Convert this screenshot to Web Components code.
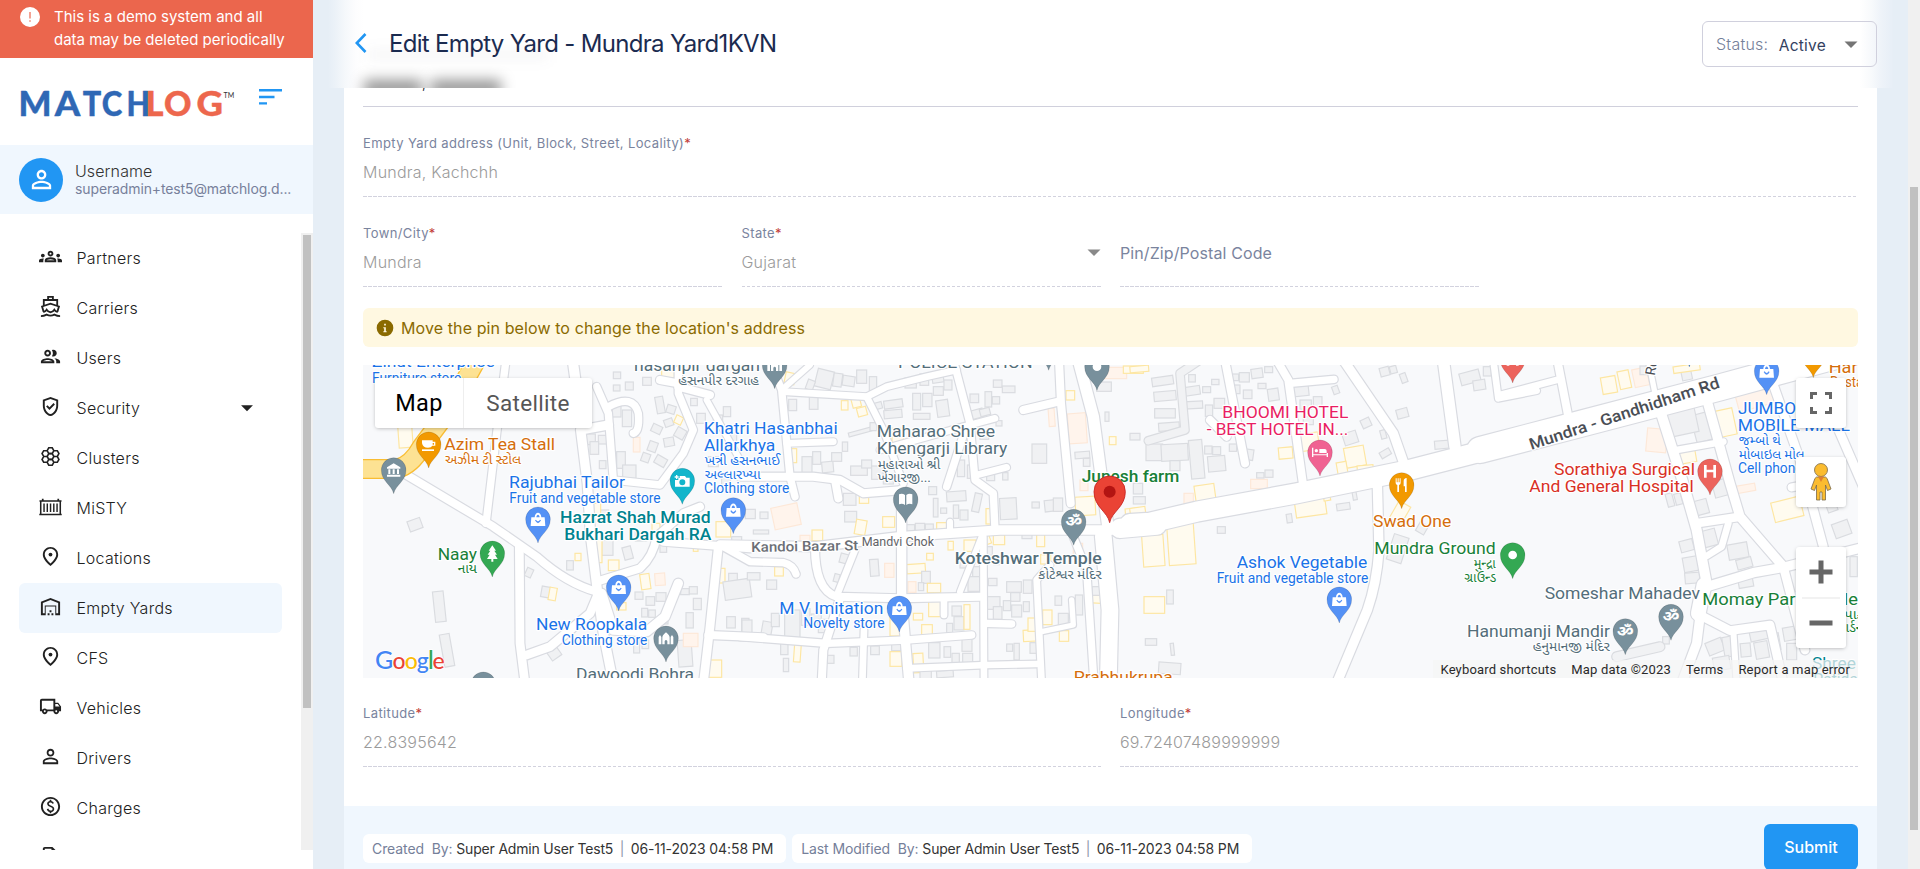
<!DOCTYPE html>
<html lang="en">
<head>
<meta charset="utf-8">
<title>Edit Empty Yard</title>
<style>
html,body{margin:0;height:100%;overflow:hidden}
body{font-family:Inter,"Liberation Sans",sans-serif;background:#e6eef6;color:#212121}
</style>
</head>
<body>
<yard-app></yard-app>
<script>
const define = (name, html, after) => {
  const t = document.createElement('template');
  t.innerHTML = html;
  customElements.define(name, class extends HTMLElement {
    constructor() {
      super();
      this.attachShadow({mode: 'open'}).appendChild(t.content.cloneNode(true));
    }
    connectedCallback() { if (after) after.call(this, this.shadowRoot); }
  });
};

/* ---------- icons ---------- */
const ICONS = {
  groups: '<path d="M4 13c1.1 0 2-.9 2-2s-.9-2-2-2-2 .9-2 2 .9 2 2 2zm1.13 1.1c-.37-.06-.74-.1-1.13-.1-.99 0-1.93.21-2.78.58C.48 14.9 0 15.62 0 16.43V18h4.5v-1.61c0-.83.23-1.61.63-2.29zM20 13c1.1 0 2-.9 2-2s-.9-2-2-2-2 .9-2 2 .9 2 2 2zm4 3.43c0-.81-.48-1.53-1.22-1.85-.85-.37-1.79-.58-2.78-.58-.39 0-.76.04-1.13.1.4.68.63 1.46.63 2.29V18H24v-1.57zm-7.76-2.78c-1.17-.52-2.61-.9-4.24-.9-1.63 0-3.07.39-4.24.9C6.68 14.13 6 15.21 6 16.39V18h12v-1.61c0-1.18-.68-2.26-1.76-2.74zM8.07 16c.09-.23.13-.39.91-.69.97-.38 1.99-.56 3.02-.56s2.05.18 3.02.56c.77.3.81.46.91.69H8.07zM12 8c.55 0 1 .45 1 1s-.45 1-1 1-1-.45-1-1 .45-1 1-1m0-2c-1.66 0-3 1.34-3 3s1.34 3 3 3 3-1.34 3-3-1.34-3-3-3z"/>',
  boat: '<g fill="none" stroke="currentColor" stroke-width="1.9"><path d="M9.5 4.6V2h5v2.6M5 10.6V5.2h14v5.4M4.8 17.6L3.2 12 12 9.1l8.800 2.900-1.600 5.600M4.500 17.900c1.600-.3 2.600-1.100 3.500-2.500 1 1.600 2.300 2.600 4 2.600s3-1 4-2.600c.9 1.400 1.900 2.200 3.500 2.500M2 22c2.400 0 4-.5 6-1.500 2.500 1.300 5.500 1.300 8 0 2 1 3.600 1.500 6 1.500"/></g>',
  people: '<path d="M9 13.750c-2.340 0-7 1.170-7 3.500V19h14v-1.750c0-2.330-4.660-3.500-7-3.500zM4.340 17c.84-.58 2.870-1.250 4.660-1.250s3.820.67 4.660 1.250H4.340zM9 12c1.930 0 3.500-1.570 3.500-3.500S10.930 5 9 5 5.500 6.570 5.500 8.500 7.070 12 9 12zm0-5c.83 0 1.500.67 1.500 1.500S9.830 10 9 10s-1.500-.67-1.500-1.500S8.170 7 9 7zm7.040 6.810c1.160.84 1.960 1.960 1.960 3.440V19h4v-1.750c0-2.020-3.500-3.170-5.960-3.440zM15 12c1.930 0 3.500-1.570 3.500-3.500S16.930 5 15 5c-.54 0-1.040.13-1.500.35.63.89 1 1.980 1 3.150s-.37 2.260-1 3.150c.46.22.96.35 1.500.35z"/>',
  shield: '<path d="M12 2 4 5v6.090c0 5.050 3.410 9.760 8 10.910 4.590-1.150 8-5.860 8-10.910V5l-8-3zm6 9.090c0 4-2.550 7.700-6 8.830-3.450-1.130-6-4.820-6-8.830V6.310l6-2.120 6 2.120v4.780zm-9.180-.5L7.400 12l3.540 3.540 5.660-5.660-1.410-1.410-4.240 4.240-2.130-2.120z"/>',
  hive: '<g fill="none" stroke="currentColor" stroke-width="1.700"><path d="M10.200 9h3.600l1.700 3-1.700 3h-3.600l-1.700-3z"/><path d="M10.200 2.900h3.600l1.700 3-1.700 3h-3.600l-1.700-3zM10.200 15.100h3.600l1.700 3-1.700 3h-3.600l-1.700-3zM15.500 5.950h3.600l1.700 3-1.700 3h-3.600M15.500 12.050h3.600l1.700 3-1.700 3h-3.600M8.500 5.950H4.900l-1.700 3 1.700 3h3.600M8.500 12.050H4.900l-1.700 3 1.700 3h3.600"/></g>',
  container: '<path d="M3 4h1.800v1.500h14.400V4H21v1.500h2.500V7H23v12.500h.7V21H.3v-1.500H1V7H.5V5.500H3zM2.600 7v12.500h18.800V7zM4.500 8.800h1.500v9H4.500zm3.400 0h1.500v9H7.900zm3.400 0h1.500v9h-1.500zm3.400 0h1.500v9h-1.500zm3.400 0h1.500v9h-1.500z" fill-rule="evenodd"/>',
  pin: '<path fill-rule="evenodd" d="M12 2c-4.200 0-8 3.220-8 8.200 0 3.320 2.670 7.250 8 11.800 5.330-4.550 8-8.480 8-11.800C20 5.220 16.200 2 12 2zm0 17.300c-4.020-3.700-6-6.800-6-9.100C6 6.600 8.700 4 12 4s6 2.600 6 6.200c0 2.300-1.980 5.400-6 9.100z"/><circle cx="12" cy="10" r="2"/>',
  warehouse: '<path d="M20 8.350V19h-2v-8H6v8H4V8.350l8-3.200 8 3.200zM22 21V7L12 3 2 7v14h5v-9h10v9h5zm-11-2H9v2h2v-2zm2-3h-2v2h2v-2zm2 3h-2v2h2v-2z"/>',
  truck: '<path fill-rule="evenodd" d="M20 8h-3V4H3c-1.100 0-2 .9-2 2v11h2c0 1.660 1.340 3 3 3s3-1.340 3-3h6c0 1.660 1.340 3 3 3s3-1.340 3-3h2v-5l-3-4zm-.5 1.500l1.960 2.500H17V9.500h2.500zM6 18c-.55 0-1-.45-1-1s.45-1 1-1 1 .45 1 1-.45 1-1 1zm2.220-3c-.55-.61-1.330-1-2.220-1s-1.670.39-2.220 1H3V6h12v9H8.220zM18 18c-.55 0-1-.45-1-1s.45-1 1-1 1 .45 1 1-.45 1-1 1z"/>',
  person: '<path d="M12 5.900c1.160 0 2.100.94 2.100 2.100s-.94 2.100-2.100 2.100S9.900 9.160 9.900 8s.94-2.100 2.100-2.100m0 9c2.970 0 6.100 1.460 6.100 2.100v1.100H5.900V17c0-.64 3.130-2.100 6.100-2.100M12 4C9.790 4 8 5.790 8 8s1.790 4 4 4 4-1.790 4-4-1.790-4-4-4zm0 9c-2.670 0-8 1.340-8 4v3h16v-3c0-2.660-5.330-4-8-4z"/>',
  paid: '<path d="M12 2C6.480 2 2 6.480 2 12s4.480 10 10 10 10-4.480 10-10S17.520 2 12 2zm0 18c-4.410 0-8-3.590-8-8s3.590-8 8-8 8 3.590 8 8-3.590 8-8 8zm.89-8.900c-1.780-.59-2.640-.96-2.640-1.900 0-1.020 1.110-1.390 1.810-1.390 1.310 0 1.790.99 1.900 1.340l1.580-.67c-.15-.44-.82-1.910-2.660-2.230V5h-1.750v1.260c-2.600.56-2.620 2.850-2.620 2.960 0 2.270 2.250 2.910 3.350 3.310 1.580.56 2.280 1.070 2.280 2.030 0 1.130-1.050 1.610-1.980 1.610-1.820 0-2.340-1.870-2.400-2.090l-1.660.67c.63 2.190 2.280 2.780 3.020 2.960V19h1.750v-1.240c.52-.09 3.020-.59 3.020-3.220.01-1.390-.6-2.610-3-3.440z"/>',
  doc: '<path d="M4 22V4c0-1.100.9-2 2-2h8l6 6v14zM6 4v16h12V9h-5V4z"/>',
  alert: '<path fill-rule="evenodd" d="M12 2a10 10 0 100 20 10 10 0 000-20zm-.6 5h1.200v6.500h-1.200zm0 8.300h1.200v1.500h-1.200z"/>',
  info: '<path fill-rule="evenodd" d="M12 2a10 10 0 100 20 10 10 0 000-20zm-1 5h2v2h-2zm-1 4h3v4.800h1V17h-4v-1.200h1V12.200h-1z"/>',
  caret: '<path d="M5.500 9.500h13L12 16z"/>'
};
define('ui-icon', `<style>:host{display:block;width:24px;height:24px;flex:none}svg{display:block;width:100%;height:100%}</style><svg viewBox="0 0 24 24" fill="currentColor"></svg>`,
  function (r) { r.querySelector('svg').innerHTML = ICONS[this.getAttribute('name')] || ''; });

/* ---------- shared scrollbar ---------- */
define('scroll-track', `<style>:host{display:block;width:12px;background:#f0f0f0;flex:none}
div{width:8px;margin:0 2px;background:#c1c1c1;height:var(--len);transform:translateY(var(--off))}</style><div></div>`);

/* ---------- sidebar ---------- */
define('demo-banner', `<style>:host{display:flex;height:58px;background:#eb664d;color:#fff;box-sizing:border-box;padding:5px 0 0 18px;gap:12px;font-size:15px;line-height:23px}
p{margin:0;white-space:nowrap}</style><ui-icon name="alert"></ui-icon><p>This is a demo system and all<br>data may be deleted periodically</p>`);

define('brand-bar', `<style>:host{display:flex;height:87px;align-items:flex-start}
svg{display:block}.logo{margin:16px 0 0 18px}.menu{margin:31px 0 0 18px}
text{font-family:Lato,Inter,sans-serif;font-weight:900}</style>
<svg class="logo" width="220" height="50" viewBox="18 74 220 50"><g font-size="34" stroke-width=".4" stroke-linejoin="round"><text y="115.600" fill="#2f68b5" stroke="#2f68b5"><tspan x="18.500" textLength="33" lengthAdjust="spacingAndGlyphs">M</tspan><tspan x="54.800" textLength="25.500" lengthAdjust="spacingAndGlyphs">A</tspan><tspan x="82.800" textLength="18.500" lengthAdjust="spacingAndGlyphs">T</tspan><tspan x="101.800" textLength="20.500" lengthAdjust="spacingAndGlyphs">C</tspan><tspan x="126.500" textLength="23.500" lengthAdjust="spacingAndGlyphs">H</tspan></text><text y="115.600" fill="#ed674d" stroke="#ed674d"><tspan x="145.400" textLength="18" lengthAdjust="spacingAndGlyphs">L</tspan><tspan x="164" textLength="27.500" lengthAdjust="spacingAndGlyphs">O</tspan><tspan x="196.500" textLength="26.500" lengthAdjust="spacingAndGlyphs">G</tspan></text></g><text x="223.500" y="97.500" font-size="7" style="font-weight:400" fill="#333">TM</text></svg>
<svg class="menu" width="26" height="18" viewBox="0 0 26 18" fill="#2196f3"><path d="M3 0h23v2.500H3zM3 6.800h15.500v2.400H3zM3 13.200h8v2.400H3z"/></svg>`);

define('user-card', `<style>:host{display:flex;height:69px;background:#f0f7fe;align-items:center;padding-left:19px;gap:12px}
.a{width:44px;height:44px;border-radius:50%;background:#2196f3;color:#fff;display:grid;place-items:center}
.a ui-icon{width:29px;height:29px;margin-top:-1px}.t{margin-top:-2px}b{display:block;font-weight:300;font-size:16px;line-height:20px;letter-spacing:.1px;color:#333}
span{display:block;font-size:14px;letter-spacing:-.12px;line-height:16px;color:#77809b;white-space:nowrap}</style>
<div class="a"><ui-icon name="person"></ui-icon></div><div class="t"><b>Username</b><span>superadmin+test5@matchlog.d...</span></div>`);

define('nav-item', `<style>:host{display:flex;height:50px;align-items:center;border-radius:6px;margin:0 19px;padding:0 24px 0 20px;box-sizing:border-box;font-weight:300;font-size:16px;letter-spacing:.28px;color:#212121}
:host([active]){background:#f0f7fe}ui-icon{width:23px;height:23px;margin-top:-3px}.c{margin:-1px 0 0 auto;width:22px;display:none}:host([more]) .c{display:block}
span{margin-left:14.500px;margin-top:-1px}</style><ui-icon class="i"></ui-icon><span><slot></slot></span><ui-icon class="c" name="caret"></ui-icon>`,
  function (r) { const i = r.querySelector('.i'); i.shadowRoot.querySelector('svg').innerHTML = ICONS[this.getAttribute('icon')]; i.setAttribute('name', this.getAttribute('icon')); });

define('side-bar', `<style>:host{display:flex;flex-direction:column;width:313px;background:#fff;flex:none}
.scroll{display:flex;margin-top:19px;height:617px;overflow:hidden}nav{flex:1;overflow:hidden}scroll-track{--len:473px;--off:2px}</style>
<demo-banner></demo-banner><brand-bar></brand-bar><user-card></user-card>
<div class="scroll"><nav>
<nav-item icon="groups">Partners</nav-item><nav-item icon="boat">Carriers</nav-item><nav-item icon="people">Users</nav-item>
<nav-item icon="shield" more>Security</nav-item><nav-item icon="hive">Clusters</nav-item><nav-item icon="container">MiSTY</nav-item>
<nav-item icon="pin">Locations</nav-item><nav-item icon="warehouse" active>Empty Yards</nav-item><nav-item icon="pin">CFS</nav-item>
<nav-item icon="truck">Vehicles</nav-item><nav-item icon="person">Drivers</nav-item><nav-item icon="paid">Charges</nav-item><nav-item icon="doc"></nav-item>
</nav><scroll-track></scroll-track></div>`);

/* ---------- header ---------- */
define('page-header', `<style>:host{display:flex;height:88px;box-sizing:border-box;align-items:center;padding:0 16px 0 27px;overflow:hidden;isolation:isolate;
background:linear-gradient(90deg,#e6eef6 0,#ecf2f8 8px,#f5f8fb 17px,#fdfdfe 28px,#fff 36px,#fff calc(100% - 33px),#f8fafc calc(100% - 22px),#eef3f9 calc(100% - 12px),#e8eff7 calc(100% - 2px),#e7eef6)}
h1{margin:-1px 0 0 22px;font-weight:400;font-size:24px;letter-spacing:-.69px;color:#1b2b50;white-space:nowrap}
.haze{position:absolute;z-index:-1;filter:blur(7px)}
.h1{left:36px;top:80px;width:58px;height:17px;background:rgba(0,0,0,.42)}.h2{left:103px;top:80px;width:70px;height:17px;background:rgba(0,0,0,.42)}
.h3{left:40px;top:50px;width:180px;height:9px;background:rgba(60,60,90,.06)}
.st{margin-left:auto;width:175px;height:46px;box-sizing:border-box;border:1px solid #d0d0dd;border-radius:6px;display:flex;background:#fff linear-gradient(90deg,#fff 0 91%,#f3f6fa);align-items:center;padding:0 13px;font-size:16px;color:#75809a;font-weight:300;letter-spacing:.22px}
.st b{font-weight:400;color:#33415f;margin-left:10.500px;font-size:15.500px;padding-top:2px}.st ui-icon{margin-left:auto;color:#757575}</style>
<div class="haze h3"></div><div class="haze h1"></div><div class="haze h2"></div>
<svg width="12" height="20" viewBox="0 0 12 20" fill="none" stroke="#2196f3" stroke-width="2.600" style="margin-top:-2px"><path d="M10.500 1L1.800 10l8.700 9"/></svg>
<h1>Edit Empty Yard - Mundra Yard1KVN</h1>
<div class="st"><span>Status:</span><b>Active</b><ui-icon name="caret"></ui-icon></div>`);

/* ---------- form ---------- */
define('form-field', `<style>:host{display:block;height:90px;box-sizing:border-box;position:relative;
background:repeating-linear-gradient(90deg,#d2d2de 0 3.500px,transparent 3.500px 5px) left bottom/100% 1px no-repeat}
:host([solid]){background:linear-gradient(#d0d0dc,#d0d0dc) left bottom/100% 1px no-repeat}
label{display:block;padding-top:28px;font-size:13px;line-height:16px;color:#7a849e;letter-spacing:.38px}label i{font-style:normal;color:#c23b36}
.v{font-weight:300;font-size:16px;line-height:20px;margin-top:11px;color:#9b9b9b;letter-spacing:.22px}
:host([solid]) .v{color:#222}
:host([empty]) label{font-size:16px;padding-top:46px;line-height:20px;letter-spacing:.1px}:host([empty]) i,:host([empty]) .v{display:none}
ui-icon{display:none;color:#757575;opacity:.85}:host([select]) ui-icon{display:block;position:absolute;right:-5px;top:43px}</style>
<label><span></span><i>*</i></label><div class="v"><slot></slot></div><ui-icon name="caret"></ui-icon>`,
  function (r) { r.querySelector('span').textContent = this.getAttribute('label'); });

define('info-notice', `<style>:host{display:flex;height:39px;border-radius:6px;background:#fff8e1;color:#8a6a00;align-items:center;padding-left:12px;font-size:16px;letter-spacing:.1px;margin:21px 0 18px 0}
ui-icon{width:20px;height:20px;margin-right:6px}</style><ui-icon name="info"></ui-icon><slot></slot>`);

define('audit-chip', `<style>:host{display:flex;height:29px;background:#fff;border-radius:6px;align-items:center;padding:0 13px 0 9px;font-size:14px;letter-spacing:-.19px;color:#333;white-space:pre}
.l{color:#75809a;letter-spacing:-.09px}.b{color:#8f97ac;margin:0 6.500px}::slotted([slot=when]){letter-spacing:-.1px}</style><span class="l"></span><slot name="who"></slot><span class="b">|</span><slot name="when"></slot>`,
  function (r) { r.querySelector('span').textContent = this.getAttribute('label') + '  By: '; });

define('submit-button', `<style>:host{display:block;width:94px;height:46px;border-radius:6px;background:#2196f3;color:#fff;font-size:16px;line-height:46px;text-align:center;font-weight:500}</style><slot></slot>`);

/* ---------- map ---------- */
/* geometry units are thirds of a pixel; a block index selects a horizontal offset */
const OFF = [0, 1170, 2340, 3450];
const ROADS = [
 [0,24,'M170 375L430 530 560 620Q650 700 740 725'],[0,22,'M468 30L440 250 408 520'],[0,26,'M508 590L510 880 525 1000'],
 [0,26,'M530 915L600 890 720 790 745 730'],[0,30,'M668 30L695 225'],[0,28,'M775 225L692 240 712 400 722 560 742 720 760 850 790 1000'],
 [0,22,'M740 110L775 190 790 390 930 405 1000 310 1030 240 985 130 985 60'],[0,22,'M775 170Q850 130 865 190Q870 245 850 250'],[0,24,'M985 110L1080 135'],[0,24,'M985 100L930 90'],
 [0,18,'M1070 150L1170 330'],[0,24,'M740 695L870 655Q910 620 920 560L1000 490 1050 470'],[0,24,'M940 575L1200 595'],[0,26,'M1105 590L1080 830 1060 1000'],
 [0,24,'M1075 855L1240 862'],[0,28,'M985 700L945 800 890 845 790 840 755 730'],
 [1,22,'M95 45L125 120 150 380 165 440'],[1,18,'M125 120L210 45'],[1,20,'M130 125L380 140 440 110 560 80 650 60'],[1,20,'M380 140L430 240 490 400'],
 [1,24,'M0 380L220 380 300 390 370 430 490 420'],[1,20,'M140 280L280 275'],[1,24,'M285 390L295 445'],[1,22,'M640 30L690 220 705 390 760 430 765 540'],
 [1,20,'M420 300L670 230 765 205'],[1,22,'M675 240L620 410'],[1,20,'M710 375L800 352'],[1,18,'M630 545L630 515'],
 [1,28,'M-60 585L230 590 480 560 780 540 1000 540 1200 540'],[1,28,'M485 420L485 740 507 1000'],
 [1,24,'M957 30L963 160 992 460'],[1,34,'M1015 30L1060 200 1105 540'],[1,50,'M1090 560L1110 780 1105 1000'],[1,22,'M1000 560L1040 660 1062 1000'],
 [1,24,'M225 590Q225 720 290 740L480 745 720 740'],[1,20,'M345 600L295 725'],[1,22,'M-50 590L30 635 130 638Q160 645 168 672'],
 [1,20,'M730 560L732 1000'],[1,22,'M0 860L260 880 500 870 695 855'],[1,24,'M300 745L250 900 245 1000'],[1,20,'M372 840L367 1000'],
 [1,22,'M740 820L815 822'],[1,20,'M500 955L740 945 890 942'],[1,20,'M905 1000L890 690 930 645'],[1,16,'M905 845L1000 825 995 750'],[1,24,'M850 180L955 155'],
 [1,20,'M612 745L612 795'],[1,18,'M660 725L725 560'],
 [2,24,'M285 30L345 340'],[2,24,'M440 30L475 90 520 410'],[2,22,'M480 100L612 88'],[2,28,'M640 30L790 250 825 350'],[2,34,'M940 30L975 290'],[2,20,'M1090 30L1105 145 1220 122'],
 [2,28,'M742 400L747 600Q740 700 712 780L620 1000'],[2,24,'M240 210L290 260'],
 [3,24,'M172 30L205 200'],[3,20,'M0 135L170 90'],[3,16,'M445 30L465 130'],[3,30,'M480 180L550 400 590 540 620 700'],[3,28,'M615 130L690 400 720 500 850 650'],
 [3,20,'M530 300L670 275'],[3,26,'M590 520L720 500'],[3,20,'M685 520L665 590 620 618'],[3,28,'M620 710L760 668 850 652 1100 590'],[3,26,'M850 650L915 900'],
 [3,26,'M590 790L690 842 810 825 850 1000'],[3,44,'M595 790L612 705'],[3,28,'M600 800L590 880 545 1000'],[3,18,'M700 840L710 1000'],
 [3,26,'M815 90L900 330 970 590'],[3,26,'M990 180L1090 410'],[3,24,'M875 412L930 402'],
 [1,58,'M1140 535L1250 525'],[2,60,'M0 522L60 518 200 485 500 430 830 362 1110 290'],[3,78,'M-60 300L190 235 660 112 1000 20']
];
const GREY_ROADS = [[2,22,'M210 30L150 70 165 240 55 272'],[3,26,'M350 920L480 890']];
/* block, kind, x, y, w, h, rotation */
const LOTS = `0g175 508 40 32 -20|0g252 724 32 92 -6|0g276 852 30 98 -10|0g527 655 20 26 25|0g650 632 20 28 0|0g574 710 26 32 10|0y597 713 22 38 10|0y675 610 18 22 0|0y145 215 42 78 -4
0g596 896 34 30 -35|0g790 66 22 20 0|0g826 96 24 24 0|0g878 82 26 24 0|0g790 105 20 18 0|0y935 55 38 28 0|0g918 140 24 50 -10|0g950 166 26 24 18|0g905 225 30 24 25|0g943 207 26 22 -20|0y975 198 22 24 25|0g976 235 30 30 30|0g895 275 26 30 20|0g942 263 30 26 -10|0g875 310 24 26 20|0g915 320 34 26 30
0g787 165 26 36 0|0g817 180 28 50 0|0g700 252 36 32 0|0g745 256 30 26 0|0g720 275 26 38 0|0g748 332 20 24 0|0g800 305 26 50 0|0g818 345 40 40 0|0o850 262 20 44 0|0g1022 145 20 22 0|0g1040 190 26 30 0|0g1090 195 28 26 0|0g1120 170 22 30 0|0g1075 320 30 30 0|0g1130 240 30 40 0
0g750 480 26 24 0|0y728 460 24 34 0|0g755 570 34 46 0|0y736 550 20 88 0|0g820 590 26 38 -15|0y775 630 32 32 0|0g856 545 34 28 0|0y906 520 24 30 0|0g930 585 20 22 0|0y1030 582 14 22 0|0y872 672 28 46 -8|0o915 670 30 36 -4|0g855 726 24 22 0|0g888 740 26 26 0|0g918 728 30 26 0|0g875 775 18 26 0|0g896 780 20 22 0|0g930 800 24 22 0|0y800 758 28 22 0|0g851 865 18 44 0|0g876 870 20 26 0|0g984 870 42 80 -4|0o1000 850 44 40 0|0y1075 930 40 52 0|0g992 716 26 18 0|0g1018 710 24 22 0|0g1030 745 24 34 0|0g1008 788 22 46 0|0y1105 655 20 44 0|0g1136 670 26 32 0|0g1122 690 80 56 -8|0g1130 800 26 34 0|0g1175 805 22 40 0|0y1098 515 44 46 0|0g1145 560 30 26 0|0g1115 380 26 40 0
1y135 68 30 34 12|1g228 60 50 54 14|1g280 70 26 40 8|1g308 78 36 30 8|1g350 60 30 40 0|1g388 80 22 56 0|1g200 90 22 30 20|1g146 148 24 34 0|1g208 132 26 46 0|1y304 152 20 28 0|1y336 146 26 26 -15|1y352 172 28 26 -15|1g396 158 30 20 -15|1g432 150 56 24 -8|1g432 180 54 24 -5|1g495 84 34 30 0|1g540 72 26 34 0|1g576 64 34 34 -8|1g518 130 24 50 0|1g548 130 28 40 0|1g580 110 30 26 0|1g612 90 24 30 0|1g590 150 36 50 -8|1g520 190 50 18 0|1g690 132 26 26 0|1g735 125 20 46 0|1g757 140 22 22 0|1g760 90 26 22 0|1g787 108 38 20 0|1g680 180 50 26 -15|1g720 175 30 22 -15|1g768 212 18 16 0|1g720 250 26 18 0|1g325 240 70 12 -15|1g390 218 20 24 0|1g307 276 16 28 0|1y148 296 22 42 0|1g186 320 30 48 0|1g218 305 24 38 0|1g246 335 34 32 -5|1g275 308 30 26 0|1g332 348 50 28 0|1g365 330 30 24 0|1g395 348 34 40 0|1g430 372 30 30 0
1o98 466 80 66 -12|1g16 478 30 28 0|1g60 486 24 20 0|1g310 430 38 36 0|1y358 432 28 28 0|1g314 484 36 32 0|1y346 510 32 44 10|1y428 500 36 32 0|1y216 540 32 32 0|1o180 556 30 26 0|1g40 540 46 12 0|1g490 524 34 30 0|1g526 520 28 34 0|1g556 522 24 30 0|1y590 518 34 30 0|1g566 410 24 24 0|1g620 424 58 30 -4|1g580 445 14 56 0|1g602 474 18 16 0|1g640 465 16 40 0|1g660 480 24 30 0|1y738 476 16 46 0|1g700 430 22 56 12|1g780 444 50 64 -3|1g876 282 44 58 0|1g876 456 22 18 0|1g914 450 40 34 -6|1g940 444 28 40 0|1y1006 440 60 56 -3|1y978 122 26 28 0|1o985 190 54 90 -4|1g1005 305 44 20 -4|1g1030 325 20 24 0|1y1052 188 24 42 0|1y1108 260 20 24 0|1g1095 186 12 28 0|1g1070 96 44 28 0|1o1090 52 70 34 0|1y1150 48 60 22 0|1o926 175 18 54 -4|1g652 330 22 50 0|1g682 345 18 40 0|1g740 364 24 28 0|1g788 368 16 22 0|1y456 235 34 44 0|1o1020 390 24 32 0
1g390 628 26 50 -4|1o434 640 28 42 0|1y500 642 56 28 -4|1g545 664 26 36 0|1y560 610 20 20 0|1y624 574 16 26 0|1y672 570 36 34 0|1g660 630 28 24 0|1y735 556 16 26 -20|1y760 554 34 30 0|1g846 548 30 18 0|1y890 552 24 38 0|1g698 650 24 50 0|1g735 590 22 26 0|1g762 618 16 26 0|1g684 680 38 44 0|1g745 685 26 22 0|1g800 695 44 32 0|1g812 728 28 26 0|1g850 690 26 40 0|1y562 700 40 28 0|1o504 695 24 32 0|1g535 698 16 24 0|1g742 740 38 38 0|1g760 770 26 38 0|1g790 752 22 30 0|1g815 765 30 36 0|1g850 755 18 30 0|1g22 668 38 22 0|1g80 690 30 28 0|1y104 650 26 28 0|1g300 612 28 28 15|1g282 672 16 24 15|1g6 810 30 46 0|1g66 815 30 40 10|1g94 790 24 40 0|1g134 780 46 86 0|1g184 776 26 50 0|1g214 792 30 26 0|1g235 808 32 40 0
1y566 746 38 54 0|1y520 790 28 20 0|1y545 824 32 30 0|1y450 800 30 58 0|1g455 860 28 42 0|1y450 905 36 44 0|1y520 910 30 58 -3|1g566 878 34 46 0|1g620 820 18 30 0|1g636 768 28 30 0|1g642 800 30 40 0|1y672 764 18 74 0|1g612 890 20 32 0|1g636 910 22 28 0|1g666 864 30 40 0|1g668 910 30 34 0|1y850 840 40 34 -3|1y864 804 26 40 0|1y908 780 28 44 0|1g955 790 30 36 0|1g945 738 20 28 0|1g1006 735 22 60 0|1y958 842 28 32 0|1y1056 736 50 24 3|1g1056 710 34 26 0|1g800 882 18 22 0|1g870 878 22 32 0|1g822 880 16 50 0|1y162 884 20 52 4|1g122 880 22 34 0|1g130 925 16 40 0|1g262 916 20 24 0|1g330 892 22 26 0|1g392 888 26 26 0|1g540 960 34 40 0|1g590 962 50 20 -4|1y902 614 30 28 0|1o1000 580 28 36 0|1y1156 475 46 22 -5
2g66 80 64 26 -8|2g72 124 66 28 -5|2g74 176 62 28 0|2g86 218 62 24 -4|2g156 110 54 26 -8|2g176 74 20 22 0|2g162 154 56 22 -3|2g218 110 24 18 0|2g245 88 22 16 0|2g226 165 22 34 0|2g252 145 32 30 0|2g306 72 20 20 0|2g328 68 30 28 0|2g364 56 34 28 -8|2g404 50 24 18 0|2g306 105 24 26 0|2g340 120 26 26 0|2g384 100 24 16 0|2g414 116 32 36 -8|2g490 106 46 32 -6|2g608 108 18 24 -20|2g510 150 34 28 0|2g550 140 26 30 0|2g520 200 30 24 0|2g48 282 50 50 0|2g94 282 80 50 -3|2g120 332 30 30 0|2g180 270 40 116 -5|2g224 288 22 24 0|2g248 290 24 24 0|2g234 318 52 46 -5|2g298 282 22 22 0|2g346 298 24 32 8|2g0 250 30 20 0|2y500 250 66 52 -8|2y446 292 42 34 -5|2g640 246 42 36 -18|2g694 206 28 26 -25|2g752 240 16 26 -15|2g750 300 32 20 -30|2g750 52 28 26 -15|2g780 48 20 22 -15|2g812 70 18 28 -20|2g800 176 34 28 -15|2g914 272 44 24 -5|2y645 290 60 60 -10|2y622 336 30 46 -10|2y682 346 48 26 -5|2o362 388 50 28 0|2g380 368 22 16 0|2g405 360 24 22 0|2g990 64 60 36 -15|2g1030 90 36 30 -8|2g1060 50 24 28 0
2y196 404 60 64 -8|2o162 430 28 48 0|2y495 436 92 62 -8|2y580 424 20 28 -10|2g620 460 40 20 -8|2g668 424 12 26 -10|2g470 492 16 26 -8|2g262 530 24 20 0|2y38 555 64 94 -4|2y114 520 80 124 -4|2g10 400 28 32 0|2g10 440 36 22 0|2y0 472 46 20 -8|2o8 534 40 12 0|2y42 740 62 50 0|2g110 720 20 42 0|2g46 866 34 20 0|2g122 880 10 36 -6|2g86 938 66 34 4|2g862 520 28 30 30|2g780 556 46 80 18|2y790 458 40 60 30|2y0 48 56 18 -5
3g580 190 54 84 -15|3y305 80 44 50 -10|3y356 62 34 54 -12|3o400 55 44 54 -12|3y650 178 54 80 -12|3o710 120 130 50 -15|3o440 236 60 70 5|3g500 174 90 80 -12|3y534 305 54 34 -10|3o710 404 56 22 -10|3y818 448 88 60 -14|3g640 390 40 50 -15|3g580 450 44 44 -15|3g500 430 20 40 -15|3g525 430 20 34 -15|3g600 540 50 50 -15|3g540 570 40 34 -15|3g550 620 50 44 -10|3g555 668 44 32 -5|3g684 580 60 46 -10|3g710 625 46 30 -15|3g715 680 44 32 -10|3g1000 515 50 44 -20|3g980 455 30 30 -20|3g620 870 50 40 -22|3g670 860 30 60 -10|3g750 840 60 30 -12|3g722 880 30 40 -5|3g765 875 40 50 -10|3g815 850 24 50 -10|3g850 830 50 40 -10|3g640 920 50 40 -10|3g860 880 30 50 0|3g488 860 20 22 0|3g545 60 30 30 -12|3y520 45 80 20 -8|3g420 48 30 26 0|3g1050 620 22 60 0|3g750 950 50 24 0`;
const S='#546e7a', B='#1a73e8', G='#188038', O='#d56e0c', P='#e91e63', R='#d93025', T='#00838f';
/* block, text, x, baseline, size, colour, anchor, width, weight */
const LABELS = [
 [0,'Zinut Enterprise',66,52,48,B,'s',368],[0,'Furniture store',66,98,42,B,'s',268],
 [0,'Azim Tea Stall',283,300,48,O,'s',332],[0,'અઝીમ ટી સ્ટોલ',285,343,40,O,'s',228],
 [0,'Rajubhai Tailor',477,414,48,B,'s',348],[0,'Fruit and vegetable store',478,459,42,B,'s',454],
 [0,'Hazrat Shah Murad',1082,519,48,T,'e',452,500],[0,'Bukhari Dargah RA',1084,571,48,T,'e',441,500],
 [0,'Naay',381,629,48,G,'e',118],[0,'નાય',381,670,40,G,'e',58],
 [0,'New Roopkala',892,840,48,B,'e',334],[0,'Clothing store',892,884,42,B,'e',257],
 [0,'Dawoodi Bohra',678,990,48,S,'s',354],
 [0,'hasanpir dargah',852,62,48,S,'s',378],[0,'હસનપીર દરગાહ',985,104,40,S,'s',242],
 [0,'Khatri Hasanbhai',1061,252,48,B,'s',402],[0,'Allarkhya',1062,304,48,B,'s',214],[0,'ખત્રી હસનભાઈ',1064,346,40,B,'s',226],[0,'અલ્લારખ્યા',1064,387,40,B,'s',168],[0,'Clothing store',1062,429,42,B,'s',256],
 [1,'POLICE STATION',474,54,48,S,'s',404],
 [1,'Maharao Shree',410,261,48,S,'s',355],[1,'Khengarji Library',410,313,48,S,'s',392],[1,'મહારાઓ શ્રી',413,356,40,S,'s',188],[1,'ખેંગારજી...',413,397,40,S,'s',160],
 [1,'Junesh farm',1025,395,48,G,'s',293,500],
 [1,'Koteshwar Temple',1085,643,48,S,'e',441,500],[1,'કોટેશ્વર મંદિર',1085,686,40,S,'e',190],
 [1,'M V Imitation',430,792,48,B,'e',312],[1,'Novelty store',434,835,42,B,'e',244],
 [1,'Mandvi Chok',365,589,38,'#5f6368','s',217],
 [1,'Prabhukrupa',1001,998,48,O,'s',297],
 [2,'BHOOMI HOTEL',655,203,48,P,'e',378],[2,'- BEST HOTEL IN...',655,254,48,P,'e',425],
 [2,'Swad One',729,532,48,O,'s',235],[2,'Ashok Vegetable',712,655,48,B,'e',392],[2,'Fruit and vegetable store',715,698,42,B,'e',455],
 [2,'Mundra Ground',1097,611,48,G,'e',364],[2,'મુન્દ્રા',1097,655,40,G,'e',66],[2,'ગ્રાઉન્ડ',1099,696,40,G,'e',96],
 [3,'Sorathiya Surgical',585,375,48,R,'e',423],[3,'And General Hospital',581,427,48,R,'e',493],
 [3,'JUMBO',714,191,48,B,'s',174],[3,'MOBILE MALL',713,243,48,B,'s',337],[3,'જમ્બો થે',716,285,40,B,'s',126],[3,'મોબાઇલ મોલ',716,326,40,B,'s',198],[3,'Cell phone store',714,370,42,B,'s',298],
 [3,'Hanumanji Mandir',330,860,48,S,'e',429],[3,'હનુમાનજી મંદિર',330,903,40,S,'e',232],
 [3,'Someshar Mahadev',600,747,48,S,'e',466],[3,'Momay Park Garden',607,765,48,G,'s',497],[3,'પાર્ક',1033,806,40,G,'s',60],[3,'ગાર્ડન',1010,846,40,G,'s',80],
 [3,'Shree',936,958,48,T,'s',132],[3,'Patidar',940,1004,48,T,'s',150],
 [3,'Hari',986,68,48,O,'s',100],[3,'Restaurant',990,112,42,O,'s',190]
];
const PINS = [
 [0,236,283,'#f29900','cup'],[0,131,360,'#78909c','bank'],[0,427,610,'#34a853','tree'],[0,564,508,'#5491f5','bag'],[0,997,392,'#12b5cb','cam'],
 [0,1150,480,'#5491f5','bag'],[0,806,712,'#5491f5','bag'],[0,948,865,'#78909c','mosque'],[0,400,1003,'#78909c','dot'],
 [1,104,45,'#78909c','mosque'],[1,1071,50,'#78909c','dot'],[1,926,-10,'#78909c','dot'],[1,497,448,'#78909c','book'],[1,1001,515,'#78909c','om'],[1,478,775,'#5491f5','bag'],
 [2,570,307,'#f06292','bed'],[2,815,405,'#f29900','fork'],[2,628,748,'#5491f5','bag'],[2,1148,615,'#34a853','dot'],[2,1148,28,'#ec635c','H'],
 [3,630,364,'#ec635c','H'],[3,513,800,'#78909c','om'],[3,376,843,'#78909c','om'],[3,800,63,'#5491f5','bag'],[3,940,12,'#f29900','fork'],[3,568,-20,'#1a73e8','dot']
];
const GLYPH = {
 cup:'<path d="M-20-12H12V-8h8v12h-9Q8 10-2 10-18 10-20-4zM12-4v5h4v-5z" fill-rule="evenodd"/><path d="M-20 15h36v5h-36z"/>',
 bank:'<path d="M-20-8L0-20 20-8v4h-40zM-16-2h6v14h-6zM-3-2h6v14h-6zM10-2h6v14h-6zM-20 14h40v6h-40z"/>',
 tree:'<path d="M0-24L11-8H6L14 4H8l8 13H3v8h-6v-8h-13L-8 4h-6L-6-8h-5z"/>',
 bag:'<path fill-rule="evenodd" d="M-20-6H-10C-9-24 9-24 10-6H20L22 20H-22zM-5-6H5C4-16-4-16-5-6zM-9 3Q0 20 9 3L6 1Q0 11-6 1z"/>',
 cam:'<path fill-rule="evenodd" d="M-8-14H8L12-9H22V18H-22V-2H-12V-8H-8zM0-4a9 9 0 100 18 9 9 0 000-18zM-19-17h4v4h4v4h-4v4h-4v-4h-4v-4h4z"/>',
 mosque:'<path d="M-22 18V-4l4-6 4 6v22zM14 18V-4l4-6 4 6v22zM-11 18V-2q0-7 11-16 11 9 11 16v20H4V8q-4-6-8 0v10z"/>',
 book:'<path d="M-20-15Q-10-19-2-13V17Q-10 11-20 15zM20-15Q10-19 2-13V17Q10 11 20 15z"/>',
 dot:'<circle r="13"/>',
 bed:'<path d="M-24-14h4V6H20V-4q0-6-6-6H-2V2h-22zM-24 2h48v12h-4V9h-40v5h-4z"/><circle cx="-11" cy="-5" r="5"/>',
 fork:'<path d="M-18-20h3v12h3v-12h3v12h3v-12h3V-6q0 5-5 6v21h-5V0q-5-1-5-6zM6-12q0-8 9-9v42h-5V4H6z"/>',
 om:'<text y="17" font-size="50" text-anchor="middle" font-weight="700" style="font-family:\'Noto Sans\',sans-serif">ॐ</text>',
 H:'<path d="M-18-19h8v14h20v-14h8v38h-8V3h-20v16h-8z"/>'
};
define('place-map', `<style>:host{display:block;width:100%;height:313px;position:relative;overflow:hidden;font-family:Roboto,"Noto Sans Gujarati",sans-serif}
svg.m{display:block}text{paint-order:stroke;stroke-linejoin:round}
.ctl{position:absolute;background:#fff;box-shadow:0 1px 4px -1px rgba(0,0,0,.35);border-radius:3px}
.type{left:12px;top:13px;height:50px;display:flex;line-height:50px;font-size:22.500px;text-align:center}
.type b{width:88px;font-weight:400;color:#000;border-right:1px solid #eee;font-size:23.500px;letter-spacing:.3px}.type span{width:128px;color:#565656;letter-spacing:.3px}
.sq{left:1433px;width:50px;height:50px;display:grid;place-items:center}
.zoom{left:1433px;top:182px;width:50px;height:101px;box-sizing:border-box}
.attr{position:absolute;right:0;bottom:0;height:18px;display:flex;background:rgba(245,245,245,.72);font-size:13px;letter-spacing:.17px;line-height:19px;color:#2a2a2a;padding:0 8px 0 7px;gap:15px;white-space:nowrap}
.g{position:absolute;left:12px;top:280px}.g text{font-family:Lato,Inter,sans-serif;font-weight:500;stroke:#fff;stroke-width:1.500px}</style>
<svg class="m" width="1495" height="313" viewBox="0 0 1495 313"></svg>
<div class="ctl type"><b>Map</b><span>Satellite</span></div>
<div class="ctl sq" style="top:13px"><svg width="22" height="22" viewBox="0 0 22 22" fill="none" stroke="#666" stroke-width="3"><path d="M1.500 7V1.500H7M15 1.500h5.500V7M20.500 15v5.500H15M7 20.500H1.500V15"/></svg></div>
<div class="ctl sq" style="top:92px"><svg width="22" height="38" viewBox="1 0 22 38" fill="#fbbc30" stroke="#7a6a4a" stroke-width=".8"><path d="M7.500 14h9q2 1 2.500 4l3 8-3.500 1.500L16.500 22v15h-3.500v-8h-2v8H7.500V22L5.500 27.500 2 26l3-8Q5.500 15 7.500 14z"/><circle cx="12" cy="7" r="6.500"/><path d="M9 13.500h6l-3 5.500z" fill="#e08030" stroke="none"/></svg></div>
<div class="ctl zoom"><svg width="50" height="101" viewBox="0 0 50 101" fill="#666"><path d="M13.500 22.500h9v-9h5v9h9v5h-9v9h-5v-9h-9zM13.500 73.500h23v5h-23z"/><path d="M6 50.500h38v1H6z" fill="#e6e6e6"/></svg></div>
<svg class="g" width="76" height="34" viewBox="0 0 76 34" font-size="27"><text y="23.500" paint-order="stroke"><tspan x="0" fill="#4285f4" font-size="25">G</tspan><tspan x="17.500" fill="#ea4335" font-size="23">o</tspan><tspan x="29.700" fill="#fbbc05" font-size="23">o</tspan><tspan x="41.700" fill="#4285f4" font-size="23">g</tspan><tspan x="53" fill="#34a853" font-size="24">l</tspan><tspan x="57.500" fill="#ea4335" font-size="23">e</tspan></text></svg>
<div class="attr"><span>Keyboard shortcuts</span><span>Map data ©2023</span><span>Terms</span><span>Report a map error</span></div>`,
function (r) {
  const at = (b, s) => `<g transform="translate(${OFF[b]})">${s}</g>`;
  const line = (list, c, extra) => list.map(([b, w, d]) => at(b, `<path d="${d}" stroke="${c}" stroke-width="${w + extra}"/>`)).join('');
  const kinds = {g: ['#f0f1f3', '#dadce0'], y: ['#fffbef', '#fde6a2'], o: ['#fff4ec', '#fde8d8']};
  const lots = LOTS.split(/[|\n]/).map(t => {
    const m = t.match(/^(\d)([gyo])(.*)$/); if (!m) return '';
    const [x, y, w, h, a] = m[3].split(' ').map(Number), k = kinds[m[2]];
    return at(+m[1], `<rect x="${x}" y="${y}" width="${w}" height="${h}" fill="${k[0]}" stroke="${k[1]}" transform="rotate(${a} ${x + w / 2} ${y + h / 2})"/>`);
  }).join('');
  const labels = LABELS.map(([b, s, x, y, fs, c, an, w, wt]) => at(b, `<text x="${an === 'e' ? x - w : x}" y="${y}" font-size="${fs}" fill="${c}" stroke="#fff" stroke-width="7" font-weight="${wt || 400}" textLength="${w}" lengthAdjust="spacingAndGlyphs">${s}</text>`)).join('');
  const pins = PINS.map(([b, x, y, c, g]) => at(b, `<g transform="translate(${x} ${y})"><path d="M0 71C-6 44-37 34-37 0A37 37 0 0 1 37 0C37 34 6 44 0 71z" fill="${c}" stroke="#000" stroke-opacity=".18" stroke-width="2"/><g fill="#fff">${GLYPH[g]}</g></g>`)).join('');
  const hwy = 'M20 357H140Q185 345 215 290L290 190 385 20';
  r.querySelector('.m').innerHTML = `<rect width="1495" height="313" fill="#f8f9fb"/><g transform="translate(-13 -15) scale(.33333)">
  <g stroke-width="3.500">${lots}</g>
  <g fill="none" stroke-linecap="round" stroke-linejoin="round">${line(GREY_ROADS, '#dadce0', 7)}${line(GREY_ROADS, '#f1f2f4', 0)}
  ${line(ROADS, '#d9dbe1', 7)}${line(ROADS, '#ffffff', 0)}<path d="${hwy}" stroke="#f9bd33" stroke-width="60"/><path d="${hwy}" stroke="#fde293" stroke-width="52"/></g>
  ${labels}
  <text font-size="42" font-weight="500" fill="#6b6f76" stroke="#fff" stroke-width="7" transform="translate(1204 606) rotate(-1)" textLength="321" lengthAdjust="spacingAndGlyphs">Kandoi Bazar St</text>
  <text font-size="48" font-weight="500" fill="#4a4e55" stroke="#fff" stroke-width="7" transform="translate(3544 300) rotate(-18.300)" textLength="598" lengthAdjust="spacingAndGlyphs">Mundra - Gandhidham Rd</text>
  <text font-size="42" fill="#4a4e55" stroke="#fff" stroke-width="7" transform="translate(3914 78) rotate(-80)">Rd</text>
  ${pins}
  <g transform="translate(2279 425)"><path d="M0 93C-6 60-47 46-47 0A47 47 0 0 1 47 0C47 46 6 60 0 93z" fill="#ea4335" stroke="#c5221f" stroke-width="2.500"/><circle r="18" fill="#b31412"/></g></g>`;
});

/* ---------- page ---------- */
define('yard-form', `<style>:host{display:flex;flex-direction:column;background:#fff;box-sizing:border-box}
.body{padding:17px 19px 0}.row{display:grid;gap:19px}.r4{grid-template-columns:repeat(4,1fr)}.r2{grid-template-columns:1fr 1fr}
place-map{margin-bottom:-1px}
footer{margin-top:39px;background:#f0f7fe;flex:1;display:flex;padding:18px 19px 0;align-items:flex-start}
audit-chip{margin:10px 6px 0 0}submit-button{margin-left:auto}</style>
<div class="body">
<form-field solid label="Empty Yard location">Mundra, Kachchh</form-field>
<form-field label="Empty Yard address (Unit, Block, Street, Locality)">Mundra, Kachchh</form-field>
<div class="row r4"><form-field label="Town/City">Mundra</form-field><form-field select label="State">Gujarat</form-field><form-field empty label="Pin/Zip/Postal Code"></form-field></div>
<info-notice>Move the pin below to change the location's address</info-notice>
<place-map></place-map>
<div class="row r2"><form-field label="Latitude">22.8395642</form-field><form-field label="Longitude">69.72407489999999</form-field></div>
</div>
<footer><audit-chip label="Created"><span slot="who">Super Admin User Test5</span><span slot="when">06-11-2023 04:58 PM</span></audit-chip>
<audit-chip label="Last Modified"><span slot="who">Super Admin User Test5</span><span slot="when">06-11-2023 04:58 PM</span></audit-chip>
<submit-button>Submit</submit-button></footer>`);

define('yard-app', `<style>:host{display:flex;height:869px;overflow:hidden}
main{flex:1;position:relative;padding:0 31px;display:flex;min-width:0}yard-form{flex:1;min-width:0}
page-header{position:absolute;left:15px;right:15px;top:0;z-index:5}
scroll-track{--len:643px;--off:187px}</style>
<side-bar></side-bar><main><yard-form></yard-form><page-header></page-header></main><scroll-track></scroll-track>`);
</script>
</body>
</html>
